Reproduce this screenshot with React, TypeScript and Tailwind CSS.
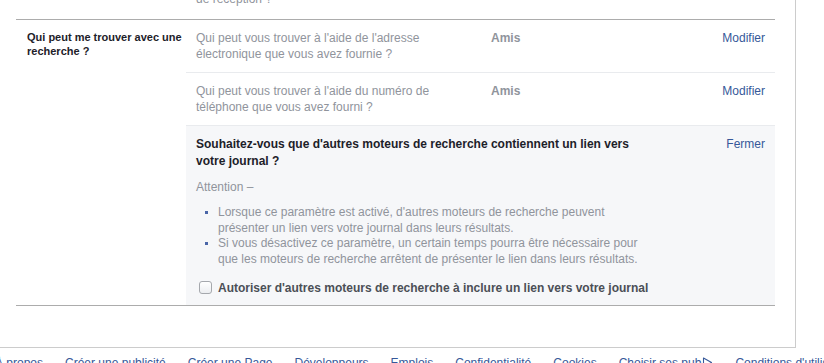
import React from "react";

const font = { fontFamily: '"Liberation Sans", Arial, Helvetica, sans-serif' };

const rows = [
  { q: "Qui peut vous trouver à l'aide de l'adresse électronique que vous avez fournie ?", v: "Amis" },
  { q: "Qui peut vous trouver à l'aide du numéro de téléphone que vous avez fourni ?", v: "Amis" },
];

const footerLinks = [
  "À propos",
  "Créer une publicité",
  "Créer une Page",
  "Développeurs",
  "Emplois",
  "Confidentialité",
  "Cookies",
  "Choisir ses pub",
  "Conditions d'utilisation",
  "Aide",
];

function AdChoicesIcon() {
  return (
    <svg width="11" height="11" viewBox="0 0 11 11" className="ml-[1px] inline-block align-[-1px]">
      <path d="M1.5 1 L1.5 10 L9.5 5.5 Z" fill="none" stroke="#365899" strokeWidth="1.1" strokeLinejoin="round" />
    </svg>
  );
}

export default function App() {
  return (
    <div className="h-[363px] w-[824px] overflow-hidden bg-white" style={font}>
      {/* Settings card */}
      <div className="w-[796px] border-r border-b border-[#cccccc] bg-white pl-[16px] pr-[20px] pb-[41px]">
        {/* tail of previous section */}
        <div className="h-[19px] overflow-hidden pl-[180px]">
          <p className="-mt-[9px] text-[12px] leading-[16px] text-[#90949c]">de réception ?</p>
        </div>

        <div className="flex border-t border-b border-[#acacac]">
          {/* left label */}
          <div className="w-[170px] shrink-0 pl-[11px] pt-[10px]">
            <p className="text-[11px] font-bold leading-[14px] text-[#1d2129]">
              Qui peut me trouver avec une recherche ?
            </p>
          </div>

          <div className="flex-1">
            {rows.map((r, i) => (
              <div key={i} className="flex border-b border-[#e9ebee] px-[10px] pt-[10px] pb-[10px] text-[12px] leading-[16px]">
                <p className="mr-[45px] w-[250px] text-[#90949c]">{r.q}</p>
                <span className="flex-1 font-bold text-[#90949c]">{r.v}</span>
                <a className="text-[#365899]">Modifier</a>
              </div>
            ))}

            {/* expanded row */}
            <div className="bg-[#f6f7f9] px-[10px] pt-[10px] pb-[9px] text-[12px]">
              <div className="flex">
                <p className="w-[450px] font-bold leading-[17px] text-[#1d2129]">
                  Souhaitez-vous que d'autres moteurs de recherche contiennent un lien vers votre journal ?
                </p>
                <span className="flex-1" />
                <a className="leading-[17px] text-[#365899]">Fermer</a>
              </div>

              <p className="mt-[9px] leading-[16px] text-[#90949c]">Attention –</p>

              <ul className="mt-[10px] w-[460px] text-[#90949c]">
                <li className="flex leading-[15.7px]">
                  <span className="mt-[6px] ml-[9px] mr-[10px] h-[3px] w-[3px] shrink-0 bg-[#4a66a8]" />
                  <span>
                    Lorsque ce paramètre est activé, d'autres moteurs de recherche peuvent présenter un lien vers votre journal dans leurs résultats.
                  </span>
                </li>
                <li className="flex leading-[15.7px]">
                  <span className="mt-[6px] ml-[9px] mr-[10px] h-[3px] w-[3px] shrink-0 bg-[#4a66a8]" />
                  <span>
                    Si vous désactivez ce paramètre, un certain temps pourra être nécessaire pour que les moteurs de recherche arrêtent de présenter le lien dans leurs résultats.
                  </span>
                </li>
              </ul>

              <label className="mt-[12px] flex items-center leading-[16px]">
                <span className="ml-[3px] mr-[6px] h-[13px] w-[13px] rounded-[3px] border border-[#a5a8ad] bg-gradient-to-b from-white to-[#eceef1]" />
                <span className="font-bold text-[#4b4f56]">
                  Autoriser d'autres moteurs de recherche à inclure un lien vers votre journal
                </span>
              </label>
            </div>
          </div>
        </div>
      </div>

      {/* Footer */}
      <div className="-ml-[5px] flex gap-[22px] whitespace-nowrap pt-[7px] text-[12px] leading-[16px] text-[#365899]">
        {footerLinks.map((l) => (
          <a key={l}>
            {l}
            {l === "Choisir ses pub" && <AdChoicesIcon />}
          </a>
        ))}
      </div>
    </div>
  );
}
